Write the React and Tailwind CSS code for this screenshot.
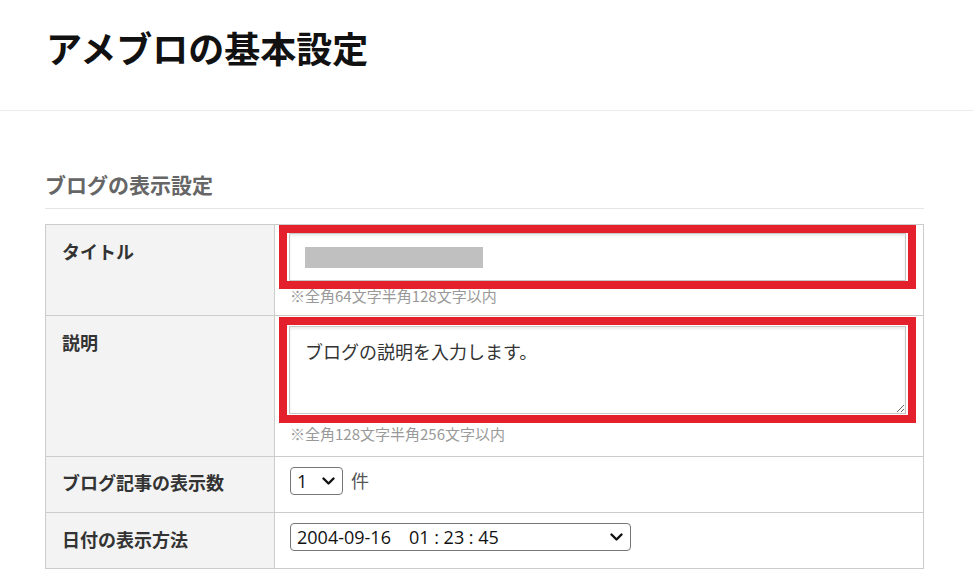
import React from "react";

function Chevron() {
  return (
    <svg width="13" height="9" viewBox="0 0 13 9" className="shrink-0">
      <polyline points="1.5,1.5 6.5,6.5 11.5,1.5" fill="none" stroke="#111" strokeWidth="2.4" strokeLinecap="round" strokeLinejoin="round" />
    </svg>
  );
}

export default function App() {
  return (
    <div className="w-[973px] min-h-[580px] bg-white font-['Noto_Sans_CJK_JP',sans-serif] text-[#333]">
      <div className="h-[111px] border-b border-[#ebebeb] pt-[20px] pl-[46px]">
        <h1 className="text-[36px] leading-[54px] font-bold text-[#111]">アメブロの基本設定</h1>
      </div>

      <div className="ml-[45px] w-[879px]">
        <h2 className="mt-[58px] h-[40px] border-b border-[#e5e5e5] text-[21px] leading-[30px] font-bold text-[#666]">
          ブログの表示設定
        </h2>

        <div className="mt-[15px] border border-[#cccccc]">
          {/* Row 1 */}
          <div className="flex h-[91px] border-b border-[#cccccc]">
            <div className="w-[229px] shrink-0 border-r border-[#cccccc] bg-[#f3f3f3] pl-[16px] pt-[13px] text-[18px] leading-[26px] font-bold">
              タイトル
            </div>
            <div className="flex-1 pl-[4px]">
              <div className="w-[637px] border-8 border-[#e3202b] px-[2px]">
                <div className="flex h-[48px] items-center border border-[#c8c8c8] bg-white pl-[15px] shadow-[inset_0_2px_3px_rgba(0,0,0,0.08)]">
                  <div className="h-[21px] w-[178px] bg-[#c0c0c0]" />
                </div>
              </div>
              <div className="ml-[11px] mt-[-3px] text-[15px] leading-[20px] text-[#999]">
                ※全角64文字半角128文字以内
              </div>
            </div>
          </div>

          {/* Row 2 */}
          <div className="flex h-[141px] border-b border-[#cccccc]">
            <div className="w-[229px] shrink-0 border-r border-[#cccccc] bg-[#f3f3f3] pl-[16px] pt-[13px] text-[18px] leading-[26px] font-bold">
              説明
            </div>
            <div className="flex-1 pl-[4px] pt-[1px]">
              <div className="flex w-[637px] border-8 border-[#e3202b] px-[2px] py-[1px]">
                <textarea
                  defaultValue="ブログの説明を入力します。"
                  className="block h-[88px] w-full border border-[#c8c8c8] bg-white pl-[15px] pt-[11px] text-[18px] leading-[27px] text-[#333] outline-none shadow-[inset_0_2px_3px_rgba(0,0,0,0.08)] font-['Noto_Sans_CJK_JP',sans-serif]"
                />
              </div>
              <div className="ml-[11px] mt-[1px] text-[15px] leading-[20px] text-[#999]">
                ※全角128文字半角256文字以内
              </div>
            </div>
          </div>

          {/* Row 3 */}
          <div className="flex h-[56px] border-b border-[#cccccc]">
            <div className="flex w-[229px] shrink-0 items-center border-r border-[#cccccc] bg-[#f3f3f3] pl-[16px] pb-[5px] text-[18px] leading-[26px] font-bold">
              ブログ記事の表示数
            </div>
            <div className="flex flex-1 items-start pl-[15px] pt-[10px]">
              <div className="flex h-[28px] w-[53px] items-center justify-between rounded-[4px] border border-[#767676] bg-white pl-[6px] pr-[7px] font-['Open_Sans','Noto_Sans_CJK_JP',sans-serif] text-[18px] leading-[26px] text-[#111]">
                <span>1</span>
                <Chevron />
              </div>
              <span className="ml-[8px] text-[18px] leading-[26px] text-[#555]">件</span>
            </div>
          </div>

          {/* Row 4 */}
          <div className="flex h-[55px]">
            <div className="flex w-[229px] shrink-0 items-center border-r border-[#cccccc] bg-[#f3f3f3] pl-[16px] pb-[4px] text-[18px] leading-[26px] font-bold">
              日付の表示方法
            </div>
            <div className="flex flex-1 items-start pl-[15px] pt-[10px]">
              <div className="flex h-[28px] w-[341px] items-center justify-between rounded-[4px] border border-[#767676] bg-white pl-[6px] pr-[7px] font-['Open_Sans','Noto_Sans_CJK_JP',sans-serif] text-[18px] leading-[26px] text-[#111] whitespace-pre">
                <span>2004-09-16　01 : 23 : 45</span>
                <Chevron />
              </div>
            </div>
          </div>
        </div>
      </div>
    </div>
  );
}
